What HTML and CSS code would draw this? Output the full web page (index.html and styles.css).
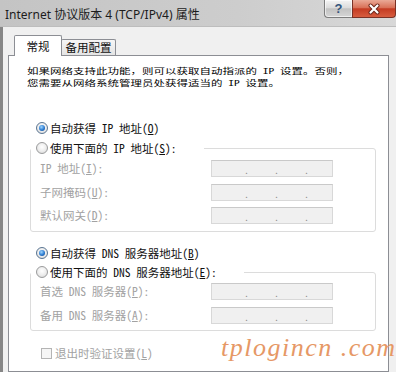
FILE: index.html
```html
<!DOCTYPE html>
<html lang="zh-CN">
<head>
<meta charset="utf-8">
<title>Internet 协议版本 4 (TCP/IPv4) 属性</title>
<link rel="stylesheet" href="styles.css">
</head>
<body>
<div class="window">
  <div class="titlebar">
    <div class="title">Internet 协议版本 4 (TCP/IPv4) 属性</div>
    <div class="caption-buttons">
      <div class="btn-help">?</div>
      <div class="btn-close">
        <svg width="14" height="12" viewBox="0 0 14 12"><path d="M3.5 2.5 L10.5 9.5 M10.5 2.5 L3.5 9.5" stroke="#6a2418" stroke-width="4" stroke-linecap="round"/><path d="M3.5 2.5 L10.5 9.5 M10.5 2.5 L3.5 9.5" stroke="#ffffff" stroke-width="2.2" stroke-linecap="round"/></svg>
      </div>
    </div>
  </div>
  <div class="client">
    <div class="tabs">
      <div class="tab active">常规</div>
      <div class="tab">备用配置</div>
    </div>
    <div class="panel">
      <p class="intro">如果网络支持此功能，则可以获取自动指派的 IP 设置。否则，<br>您需要从网络系统管理员处获得适当的 IP 设置。</p>

      <div class="option option-auto"><span class="radio checked"></span><span>自动获得 IP 地址(<u>O</u>)</span></div>
      <fieldset class="group group-ip">
        <legend class="legend-ip"><span class="option"><span class="radio"></span><span>使用下面的 IP 地址(<u>S</u>):</span></span></legend>
        <div class="fields">
          <span class="label">IP 地址(<u>I</u>):</span><span class="ipfield"><i>.</i><i>.</i><i>.</i></span>
          <span class="label">子网掩码(<u>U</u>):</span><span class="ipfield"><i>.</i><i>.</i><i>.</i></span>
          <span class="label">默认网关(<u>D</u>):</span><span class="ipfield"><i>.</i><i>.</i><i>.</i></span>
        </div>
      </fieldset>

      <div class="option option-auto option-dns"><span class="radio checked"></span><span>自动获得 DNS 服务器地址(<u>B</u>)</span></div>
      <fieldset class="group group-dns">
        <legend class="legend-dns"><span class="option"><span class="radio"></span><span>使用下面的 DNS 服务器地址(<u>E</u>):</span></span></legend>
        <div class="fields fields-dns">
          <span class="label">首选 DNS 服务器(<u>P</u>):</span><span class="ipfield"><i>.</i><i>.</i><i>.</i></span>
          <span class="label">备用 DNS 服务器(<u>A</u>):</span><span class="ipfield"><i>.</i><i>.</i><i>.</i></span>
        </div>
      </fieldset>

      <div class="check-row"><span class="checkbox"></span><span class="label">退出时验证设置(<u>L</u>)</span></div>
    </div>
  </div>
</div>
<div class="watermark">tplogincn .com</div>
</body>
</html>
```

FILE: styles.css
```css
* { box-sizing: border-box; }
html, body { margin: 0; padding: 0; }
body {
  width: 396px;
  height: 372px;
  overflow: hidden;
  position: relative;
  background: #f0f0f0;
  font-family: "Noto Sans Mono CJK SC", "Noto Sans CJK SC", sans-serif;
  font-size: 11.5px;
  color: #111;
}
u { text-decoration: underline; text-underline-offset: 1px; }

.window { display: flex; flex-direction: column; height: 372px; }

.titlebar {
  height: 27px;
  flex: none;
  display: flex;
  justify-content: space-between;
  align-items: flex-start;
  background: linear-gradient(90deg, #c4c4c4 0%, #cdcdcd 60%, #d8d8d8 100%);
  border-bottom: 1px solid #bdbdbd;
}
.title {
  font-family: "Noto Sans", "Noto Sans CJK SC", sans-serif;
  font-size: 12px;
  line-height: 14px;
  padding: 8px 0 0 5px;
  color: #1c1c1c;
  white-space: nowrap;
}
.caption-buttons { display: flex; }
.btn-help {
  width: 28px;
  height: 18px;
  border: 1px solid #7d7d7d;
  border-top: none;
  border-right: none;
  border-radius: 0 0 0 4px;
  background: linear-gradient(#f4f4f4, #dcdcdc 45%, #c2c2c2 52%, #d6d6d6);
  box-shadow: inset 0 0 0 1px rgba(255,255,255,.6);
  color: #34557d;
  font: bold 13px/17px "Liberation Sans", sans-serif;
  text-align: center;
}
.btn-close {
  width: 44px;
  height: 18px;
  border: 1px solid #7a3226;
  border-top: none;
  border-radius: 0 0 4px 0;
  background: linear-gradient(#eaa996, #d97158 45%, #c43b22 52%, #d75d3f);
  display: flex;
  align-items: center;
  justify-content: center;
}

.client {
  flex: 1;
  min-height: 0;
  display: flex;
  flex-direction: column;
  border-left: 3px solid #868686;
  padding: 8px 7px 0 5px;
}

.tabs {
  display: flex;
  align-items: flex-end;
  height: 21px;
  margin: 0 0 -1px 6px;
  position: relative;
  z-index: 1;
}
.tab {
  height: 16px;
  width: 55px;
  margin-bottom: 1px;
  border: 1px solid #8c8e94;
  border-bottom: none;
  border-radius: 2px 2px 0 0;
  background: linear-gradient(#f6f6f6, #e4e4e4);
  text-align: center;
  line-height: 15px;
  font-size: 11.5px;
}
.tab.active {
  height: 21px;
  width: 48px;
  margin-bottom: 0;
  background: #fff;
  line-height: 20px;
  margin-right: -1px;
  position: relative;
  z-index: 1;
}

.panel {
  flex: 1;
  background: #fff;
  border: 1px solid #8c8e94;
  padding-top: 10px;
}

.intro {
  margin: 0 0 0 18px;
  height: 22px;
  line-height: 16.8px;
  white-space: nowrap;
  color: #000;
  transform: scaleY(.65);
  transform-origin: 0 0;
}

.option {
  display: flex;
  align-items: center;
  height: 16px;
  line-height: 16px;
  white-space: nowrap;
}
.option-auto { margin: 32px 0 0 27px; }
.option-dns { margin-top: 13px; }

.radio {
  flex: none;
  position: relative;
  width: 12px;
  height: 12px;
  margin-right: 2px;
  border-radius: 50%;
  border: 1px solid #9a9b9c;
  background: radial-gradient(circle at 50% 40%, #ffffff 0%, #ececec 55%, #d0d0d0 100%);
}
.radio.checked { border-color: #5a7592; }
.radio.checked::after {
  content: "";
  position: absolute;
  left: 2px;
  top: 2px;
  width: 6px;
  height: 6px;
  border-radius: 50%;
  background: radial-gradient(circle at 40% 35%, #9fd6ff 0%, #2a7ad0 55%, #0e3f80 100%);
}

.group {
  margin: 4px 0 0 21px;
  width: 346px;
  min-width: 0;
  border: 1px solid #dcdcdc;
  border-radius: 3px;
  padding: 4px 0 7px 9px;
}
.group legend {
  margin-left: -9px;
  padding: 0 0 0 5px;
  height: 16px;
  background: #fff;
}
.legend-ip { width: 173px; }
.legend-dns { width: 213px; }
.group-dns { margin-top: 3px; padding: 3px 0 6px 9px; }

.fields {
  display: grid;
  grid-template-columns: 171px 122px;
  row-gap: 6.5px;
  align-items: center;
}
.fields-dns { row-gap: 7px; }

.label {
  color: #a2a2a2;
  line-height: 17px;
  white-space: nowrap;
}
.ipfield {
  height: 17px;
  display: flex;
  gap: 28px;
  padding-left: 32px;
  border: 1px solid #d8d8d8;
  border-top-color: #c9c9c9;
  background: #f0f0f0;
}
.ipfield i {
  width: 2px;
  font-style: normal;
  font-size: 10px;
  line-height: 17px;
  color: #8c8c8c;
}

.check-row {
  display: flex;
  align-items: center;
  height: 16px;
  margin: 14px 0 0 32px;
}
.checkbox {
  width: 11px;
  height: 11px;
  margin-right: 3px;
  border: 1px solid #b4b4b4;
  background: #f5f5f5;
}

.watermark {
  position: absolute;
  left: 221px;
  top: 333px;
  font-family: "Liberation Serif", serif;
  font-style: italic;
  font-size: 26px;
  letter-spacing: 1.5px;
  color: #e69866;
  white-space: nowrap;
}
```
